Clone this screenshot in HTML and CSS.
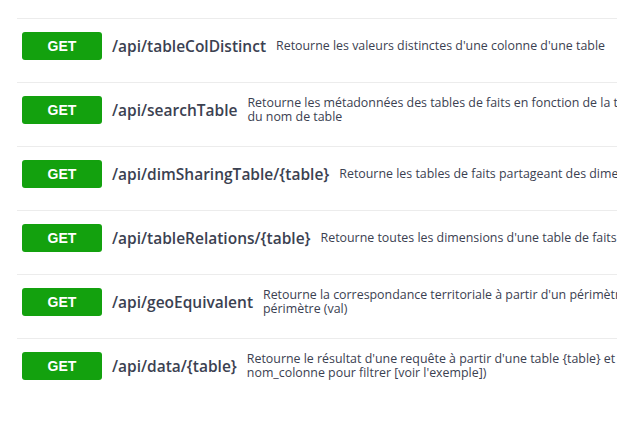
FILE: index.html
```html
<!DOCTYPE html>
<html lang="fr">
<head>
<meta charset="utf-8">
<title>API</title>
<link rel="stylesheet" href="styles.css">
</head>
<body>
<div class="ops">
  <div class="op">
    <span class="method">GET</span>
    <span class="path">/api/tableColDistinct</span>
    <span class="desc">Retourne les valeurs distinctes d'une colonne d'une table</span>
  </div>
  <div class="op">
    <span class="method">GET</span>
    <span class="path">/api/searchTable</span>
    <span class="desc">Retourne les métadonnées des tables de faits en fonction de la thématique et<br>du nom de table</span>
  </div>
  <div class="op">
    <span class="method">GET</span>
    <span class="path">/api/dimSharingTable/{table}</span>
    <span class="desc">Retourne les tables de faits partageant des dimensions avec la table {table}</span>
  </div>
  <div class="op">
    <span class="method">GET</span>
    <span class="path">/api/tableRelations/{table}</span>
    <span class="desc">Retourne toutes les dimensions d'une table de faits</span>
  </div>
  <div class="op">
    <span class="method">GET</span>
    <span class="path">/api/geoEquivalent</span>
    <span class="desc">Retourne la correspondance territoriale à partir d'un périmètre (code) et d'un type de<br>périmètre (val)</span>
  </div>
  <div class="op">
    <span class="method">GET</span>
    <span class="path">/api/data/{table}</span>
    <span class="desc">Retourne le résultat d'une requête à partir d'une table {table} et de paramètres (exemple :<br>nom_colonne pour filtrer [voir l'exemple])</span>
  </div>
</div>
</body>
</html>
```

FILE: styles.css
```css
html, body {
  margin: 0;
  padding: 0;
  background: #ffffff;
  overflow: hidden;
}
body {
  width: 617px;
  height: 421px;
  font-family: "Open Sans", "DejaVu Sans", sans-serif;
  color: #3b4151;
}
.ops {
  width: 900px;
  padding-top: 18px;
  margin-left: 17px;
}
.op {
  display: flex;
  align-items: center;
  border-top: 1px solid #ececec;
  padding: 13px 0 22px 5px;
  white-space: nowrap;
}
.method {
  flex: none;
  width: 80px;
  height: 28px;
  line-height: 28px;
  border-radius: 3px;
  background: #13a10e;
  color: #ffffff;
  font-family: "Liberation Sans", sans-serif;
  font-weight: bold;
  font-size: 14px;
  text-align: center;
}
.path {
  margin-left: 10px;
  font-size: 15.5px;
  font-weight: 600;
  color: #3b4151;
}
.desc {
  margin-left: 10px;
  font-size: 12.4px;
  line-height: 14px;
  color: #3b4151;
}
```
